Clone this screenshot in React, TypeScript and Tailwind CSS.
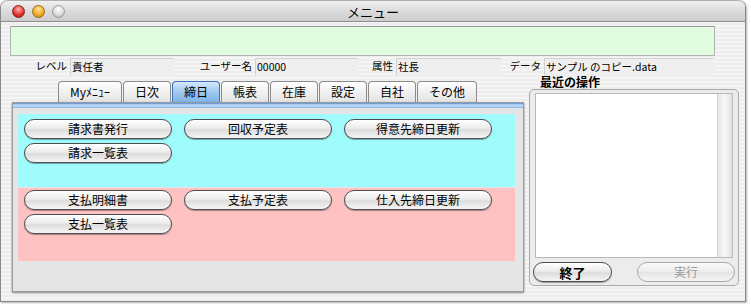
import React from "react";

const font = { fontFamily: '"Noto Sans CJK JP", "Noto Sans", sans-serif' };

function AquaButton({ label, w, disabled, bold }: { label: string; w: string; disabled?: boolean; bold?: boolean }) {
  return (
    <div
      className={`${w} h-[20px] flex items-center justify-center rounded-full text-[12px] leading-none ${
        disabled
          ? "border border-[#a8a8a8] text-[#9a9a9a] bg-[linear-gradient(#fafafa,#ececec_50%,#e4e4e4_51%,#f4f4f4)]"
          : "border border-[#4e4e4e] text-black bg-[linear-gradient(#ffffff,#ececec_45%,#dcdcdc_55%,#f6f6f6)] shadow-[0_1px_1px_rgba(0,0,0,0.35)]"
      } ${bold ? "font-bold text-[13px]" : ""}`}
    >
      {label}
    </div>
  );
}

function Tab({ label, w, active }: { label: string; w: string; active?: boolean }) {
  return (
    <div
      className={`${w} h-[21px] flex items-center justify-center rounded-t-[4px] text-[12px] leading-none border border-b-0 ${
        active
          ? "border-[#3f72b8] bg-[linear-gradient(#d4e8fb,#9cc6f0_55%,#7fb4ea)] text-black"
          : "border-[#8c8c8c] bg-[linear-gradient(#ffffff,#eeeeee_60%,#e2e2e2)] text-black"
      }`}
    >
      {label}
    </div>
  );
}

function InfoCell({ label, value, lw, vw }: { label: string; value: string; lw: string; vw: string }) {
  return (
    <div className="flex h-full items-stretch">
      <div className={`${lw} flex items-center justify-end pr-[3px] text-[10.5px] leading-none`}>{label}</div>
      <div className={`${vw} flex items-center pl-[1px] text-[10.5px] leading-none bg-[#efefef] border-t border-l border-[#d0d0d0]`}>{value}</div>
    </div>
  );
}

export default function App() {
  const stripes =
    "bg-[repeating-linear-gradient(0deg,#ededed_0px,#ededed_2px,#f5f5f5_2px,#f5f5f5_4px)]";
  return (
    <div className="w-[751px] h-[304px] bg-white overflow-hidden" style={font}>
      <div className="w-[746px] h-[302px] flex flex-col rounded-t-[7px] border-l border-r border-b border-[#8a8a8a] overflow-hidden shadow-[1px_1px_2px_rgba(0,0,0,0.3)]">
        {/* Title bar */}
        <div className="h-[22px] relative flex items-center justify-center bg-[linear-gradient(#f0f0f0,#dcdcdc_50%,#cccccc)] border-b border-[#8e8e8e] border-t border-t-[#b0b0b0] rounded-t-[7px]">
          <div className="absolute left-[11px] top-[4px] flex gap-[7px]">
            <div className="w-[13px] h-[13px] rounded-full border border-[#8a2020] bg-[radial-gradient(circle_at_50%_30%,#ffb0a8,#e0302a_60%,#a01010)]" />
            <div className="w-[13px] h-[13px] rounded-full border border-[#9a6a10] bg-[radial-gradient(circle_at_50%_30%,#ffe6a0,#f0a820_60%,#b87a08)]" />
            <div className="w-[13px] h-[13px] rounded-full border border-[#9a9a9a] bg-[radial-gradient(circle_at_50%_30%,#ffffff,#d8d8d8_60%,#a8a8a8)]" />
          </div>
          <span className="text-[13px] text-black leading-none">メニュー</span>
        </div>

        {/* Body */}
        <div className={`flex-1 flex flex-col ${stripes}`}>
          <div className="ml-[9px] mt-[4px] w-[705px] h-[30px] bg-[#e0fde0] border border-[#b4b4b4] border-t-[#9a9a9a]" />

          {/* info row */}
          <div className="mt-[2px] h-[17px] flex text-black">
            <InfoCell label="レベル" value="責任者" lw="w-[69px]" vw="w-[104px]" />
            <InfoCell label="ユーザー名" value="00000" lw="w-[81px]" vw="w-[103px]" />
            <InfoCell label="属性" value="社長" lw="w-[38px]" vw="w-[105px]" />
            <InfoCell label="データ" value="サンプル のコピー.data" lw="w-[43px]" vw="w-[170px]" />
          </div>

          {/* main */}
          <div className="flex mt-[1px]">
            {/* left */}
            <div className="flex flex-col ml-[11px]">
              <div className="flex ml-[46px] mt-[5px] gap-[1px]">
                <Tab label="Myﾒﾆｭｰ" w="w-[64px]" />
                <Tab label="日次" w="w-[48px]" />
                <Tab label="締日" w="w-[48px]" active />
                <Tab label="帳表" w="w-[48px]" />
                <Tab label="在庫" w="w-[48px]" />
                <Tab label="設定" w="w-[48px]" />
                <Tab label="自社" w="w-[48px]" />
                <Tab label="その他" w="w-[60px]" />
              </div>
              <div className="w-[512px] h-[190px] bg-[#e5e5e5] border border-[#9a9a9a] shadow-[0_1px_2px_rgba(0,0,0,0.45)] flex flex-col">
                <div className="h-[5px] bg-[linear-gradient(#4f86cc,#a9cdf2_30%,#b8d8f6_70%,#7aa8e0)]" />
                <div className="mx-[5px] mt-[6px] w-[497px] flex flex-col gap-[1px]">
                  <div className="h-[73px] bg-[#a0fcfc] pt-[5px] pl-[6px] flex flex-col gap-[4px]">
                    <div className="flex gap-[12px]">
                      <AquaButton label="請求書発行" w="w-[148px]" />
                      <AquaButton label="回収予定表" w="w-[148px]" />
                      <AquaButton label="得意先締日更新" w="w-[148px]" />
                    </div>
                    <AquaButton label="請求一覧表" w="w-[148px]" />
                  </div>
                  <div className="h-[73px] bg-[#ffc2c2] pt-[2px] pl-[6px] flex flex-col gap-[4px]">
                    <div className="flex gap-[12px]">
                      <AquaButton label="支払明細書" w="w-[148px]" />
                      <AquaButton label="支払予定表" w="w-[148px]" />
                      <AquaButton label="仕入先締日更新" w="w-[148px]" />
                    </div>
                    <AquaButton label="支払一覧表" w="w-[148px]" />
                  </div>
                </div>
              </div>
            </div>

            {/* right */}
            <div className="flex flex-col ml-[5px] -mt-[1px]">
              <div className="h-[13px] pl-[11px] text-[12px] font-bold leading-[13px]">最近の操作</div>
              <div className="mt-[1px] w-[210px] h-[197px] rounded-[5px] border border-[#a8a8a8] bg-[#ececec] flex flex-col items-center pt-[3px]">
                <div className="w-[198px] h-[165px] bg-white border border-[#b8b8b8] flex">
                  <div className="flex-1" />
                  <div className="w-[15px] h-full bg-[linear-gradient(90deg,#e6e6e6,#f8f8f8_50%,#e0e0e0)] border-l border-[#d0d0d0]" />
                </div>
                <div className="mt-[4px] w-[202px] flex justify-between">
                  <AquaButton label="終了" w="w-[79px]" bold />
                  <AquaButton label="実行" w="w-[98px]" disabled />
                </div>
              </div>
            </div>
          </div>
        </div>
      </div>
    </div>
  );
}
